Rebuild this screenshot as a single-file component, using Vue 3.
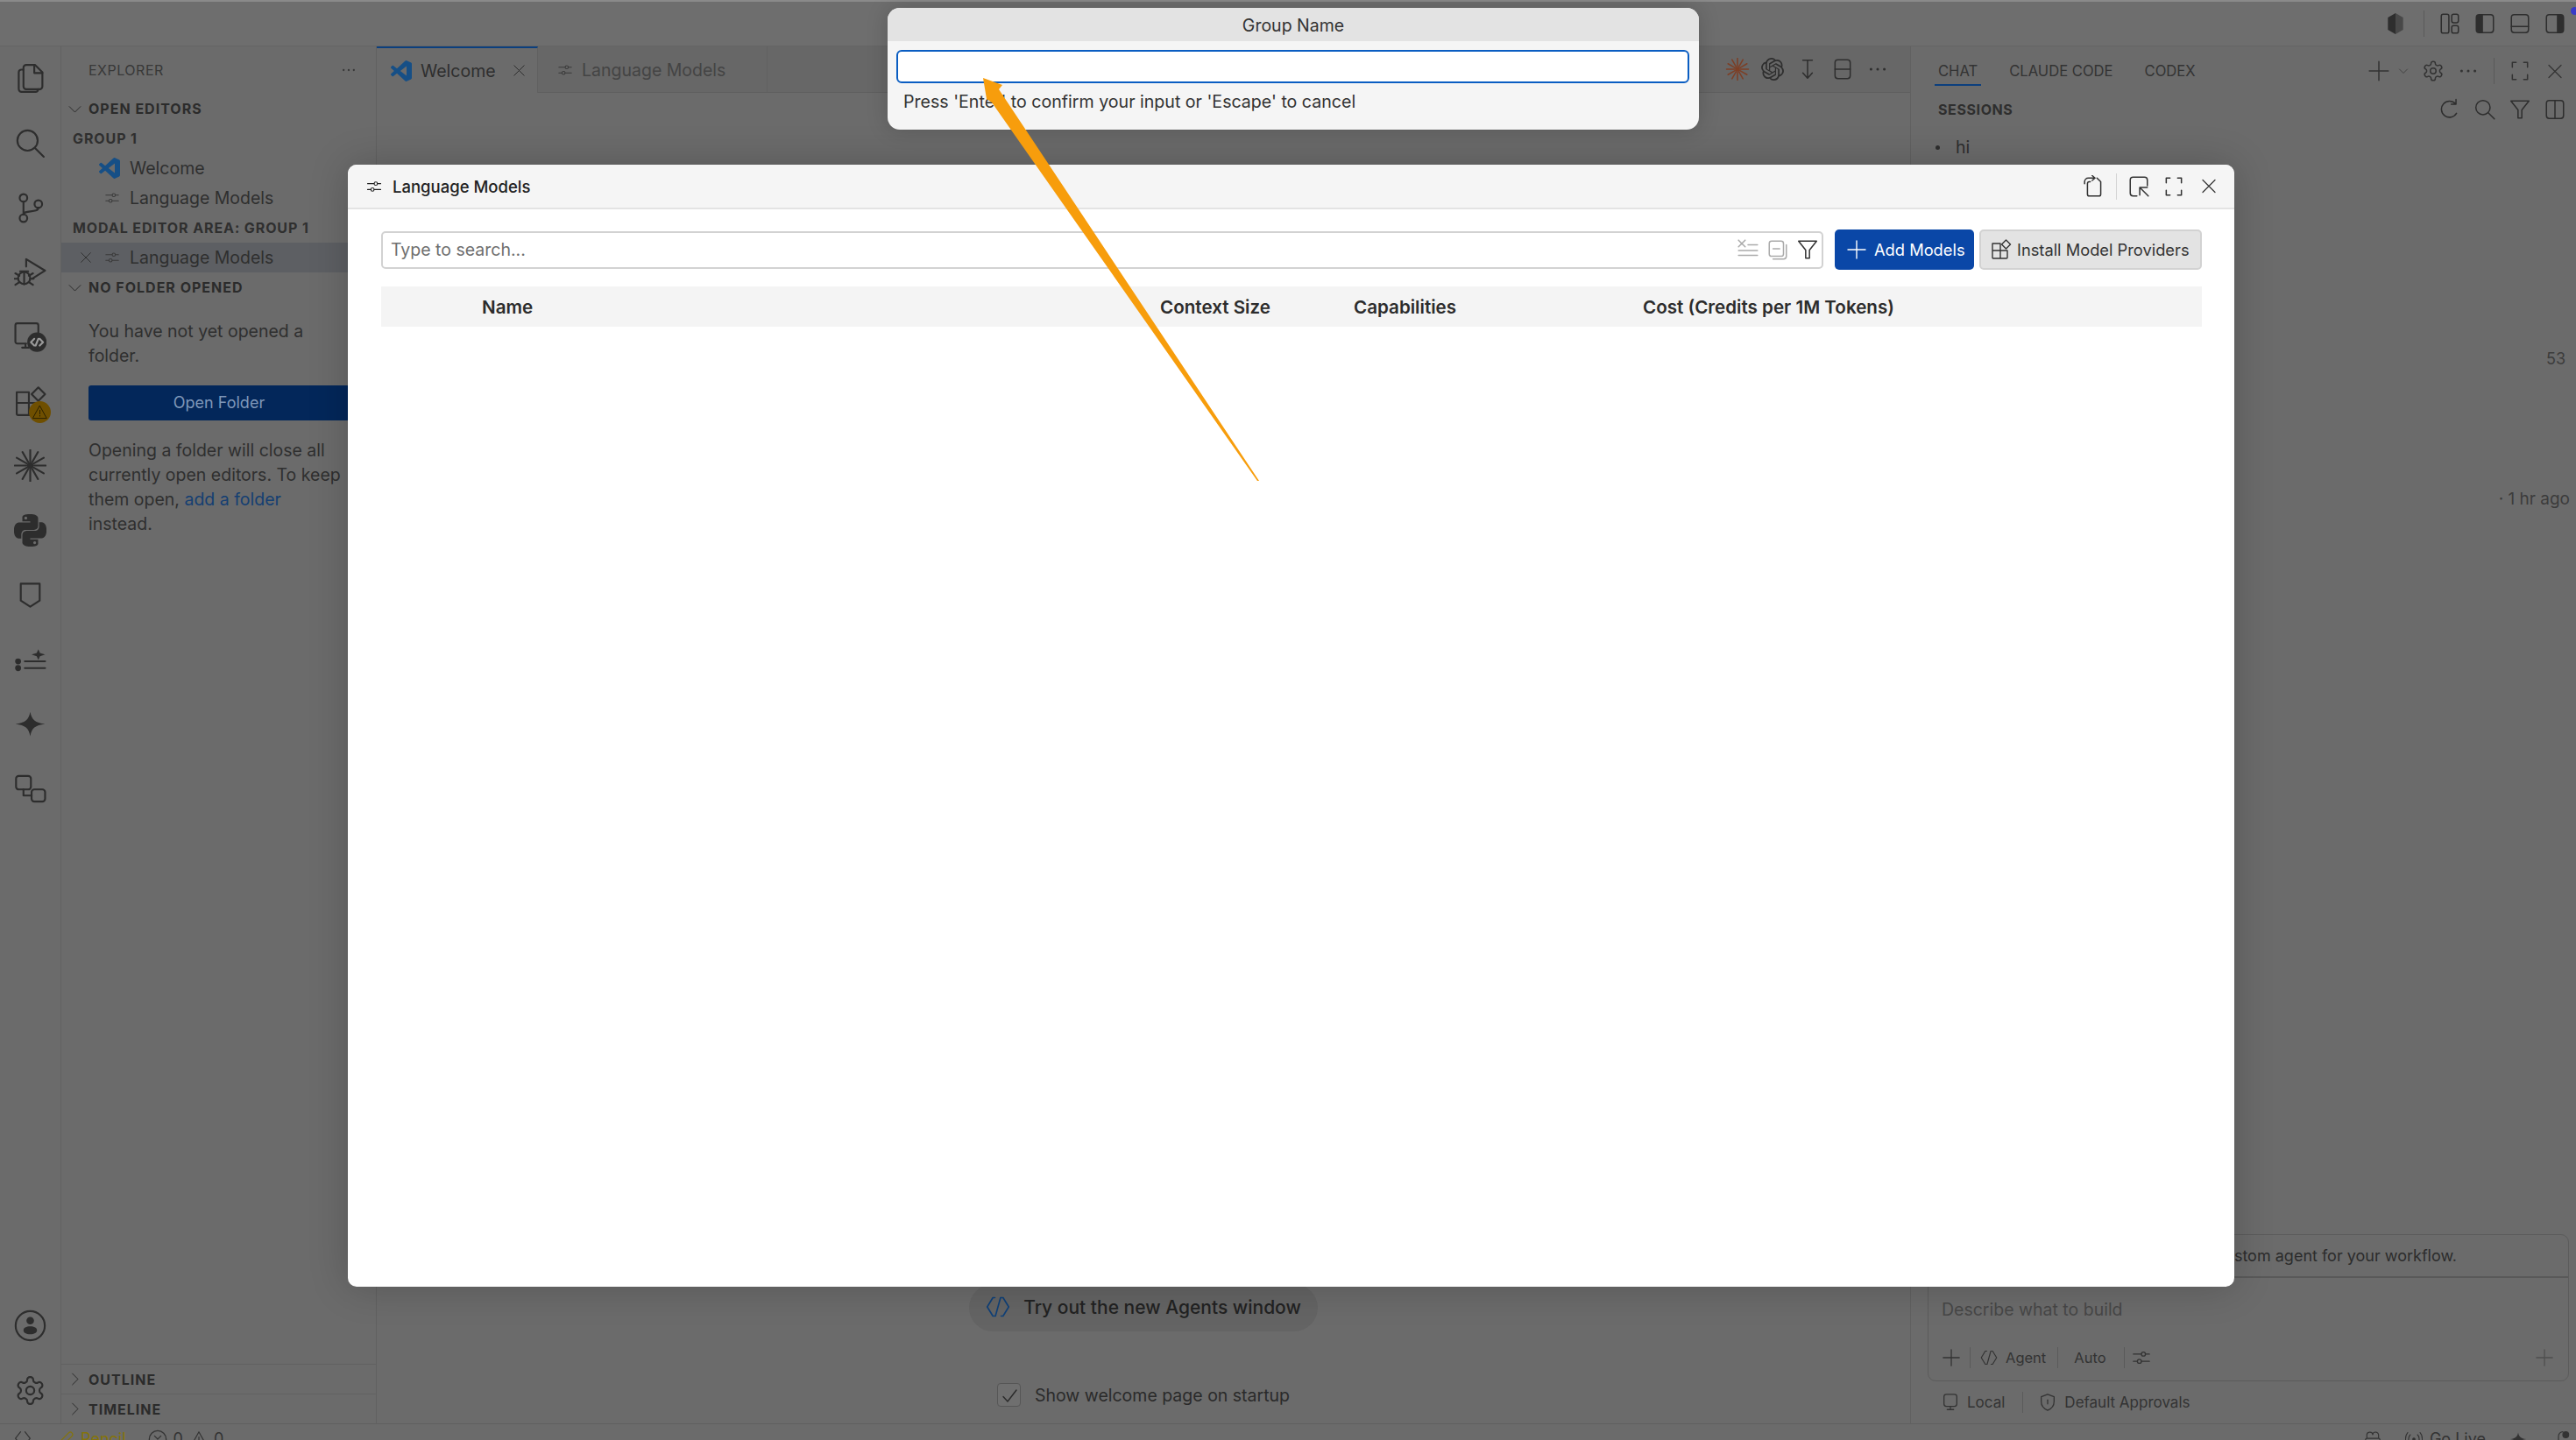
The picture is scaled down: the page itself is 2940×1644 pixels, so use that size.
<template>
  <div class="window">
    <!-- icon sprite -->
    <svg class="sprite">
      <symbol id="i-files" viewBox="0 0 24 24"><path d="M9 2h6.5L21 7.5V18a2 2 0 0 1-2 2H9a2 2 0 0 1-2-2V4a2 2 0 0 1 2-2z"/><path d="M15 2v6h6"/><path d="M7 5.500H5.500a2 2 0 0 0-2 2V20a2 2 0 0 0 2 2H16a2 2 0 0 0 2-2"/></symbol>
      <symbol id="i-search" viewBox="0 0 24 24"><circle cx="10" cy="10" r="7.500"/><path d="M15.500 15.500 22 22"/></symbol>
      <symbol id="i-git" viewBox="0 0 24 24"><circle cx="7" cy="4.500" r="2.800"/><circle cx="7" cy="19.500" r="2.800"/><circle cx="18" cy="9" r="2.800"/><path d="M7 7.300v9.400M18 11.800c0 4-11 1.500-11 5"/></symbol>
      <symbol id="i-debug" viewBox="0 0 24 24"><path d="M9 8V2.500L23 11l-9.500 6"/><circle cx="7.500" cy="16.500" r="4.500"/><path d="M4.500 11.500h6M7.500 12v9M1 13l3 1.800M14 13l-3 1.800M.5 17H3M14.500 17H12M1 21.500l3-2M14 21.500l-3-2"/></symbol>
      <symbol id="i-remote" viewBox="0 0 24 24"><path d="M9 17H2.500a1.500 1.500 0 0 1-1.500-1.500v-12A1.500 1.500 0 0 1 2.500 2h14A1.500 1.500 0 0 1 18 3.500V9M6 20h5M8.500 17v3"/><circle cx="17" cy="16" r="6.500" fill="currentColor"/><path d="m15 13.500-2.500 2.500 2.500 2.500M19 13.500l2.500 2.500-2.500 2.500M18 13.500l-2 5" stroke="#9a9a9a"/></symbol>
      <symbol id="i-ext" viewBox="0 0 24 24"><path d="M2 5h9v17H3a1 1 0 0 1-1-1zM2 13h17v8a1 1 0 0 1-1 1h-7M11 6v7"/><path d="m18 1.500 5 5-5 5-5-5z"/></symbol>
      <symbol id="i-burst" viewBox="0 0 24 24"><path d="M15 12h8.500M9 12H.5M12 15v8.500M12 9V.5M14.600 13.500 22 17.750M9.400 13.500 2 17.750M9.400 10.500 2 6.250M14.600 10.500 22 6.250M13.500 14.600 17.750 22M10.500 14.600 6.250 22M10.500 9.400 6.250 2M13.500 9.400 17.750 2"/><circle cx="12" cy="12" r="2.500" fill="currentColor" stroke="none"/></symbol>
      <symbol id="i-python" viewBox="0 0 24 24"><path fill="currentColor" stroke="none" d="M14.250.18l.9.2.730.26.590.3.450.32.340.34.250.34.160.33.100.3.040.26.020.2-.010.13V8.500l-.050.630-.130.550-.210.460-.260.380-.3.310-.330.250-.350.190-.350.140-.330.100-.3.070-.260.040-.210.020H8.770l-.690.050-.590.140-.5.220-.410.270-.330.320-.270.350-.2.360-.150.370-.1.350-.070.320-.040.270-.020.210v3.060H3.170l-.210-.030-.280-.070-.320-.120-.350-.180-.360-.260-.360-.360-.350-.460-.320-.590-.280-.730-.210-.880-.140-1.050-.050-1.230.060-1.220.160-1.040.240-.870.320-.710.360-.570.4-.44.420-.33.420-.24.4-.16.360-.1.320-.05.240-.01h.160l.060.010h8.160v-.830H6.180l-.010-2.750-.020-.370.050-.340.110-.310.170-.280.250-.260.310-.230.380-.2.440-.18.510-.15.580-.12.640-.1.710-.06.770-.04.840-.02 1.270.05zm-6.300 1.980l-.230.330-.080.410.080.410.230.340.330.220.410.090.410-.090.330-.220.230-.340.080-.410-.080-.410-.230-.33-.33-.22-.41-.09-.41.09zm13.090 3.950l.280.060.320.120.350.180.360.270.360.350.350.470.320.590.280.730.210.880.140 1.040.050 1.230-.060 1.230-.16 1.040-.24.860-.32.710-.36.570-.4.45-.42.33-.42.24-.4.16-.36.09-.32.05-.24.02-.16-.01h-8.220v.82h5.840l.01 2.76.02.36-.05.34-.11.31-.17.29-.25.25-.31.24-.38.2-.44.17-.51.15-.58.13-.64.09-.71.07-.77.04-.84.01-1.27-.04-1.07-.14-.9-.2-.73-.25-.59-.3-.45-.33-.34-.34-.25-.34-.16-.33-.1-.3-.04-.25-.02-.2.01-.13v-5.34l.05-.64.13-.54.21-.46.26-.38.3-.32.33-.24.35-.2.35-.14.33-.1.3-.06.26-.04.21-.02.13-.01h5.84l.69-.05.59-.14.5-.21.41-.28.33-.32.27-.35.2-.36.15-.36.1-.35.07-.32.04-.28.02-.21V6.070h2.090l.14.01zm-6.470 14.250l-.23.33-.08.41.08.41.23.33.33.23.41.08.41-.08.33-.23.23-.33.08-.41-.08-.41-.23-.33-.33-.23-.41-.08-.41.08z"/></symbol>
      <symbol id="i-shield" viewBox="0 0 24 24"><path d="M5 3.500h14v12.500l-7 4.500-7-4.500z"/></symbol>
      <symbol id="i-liststar" viewBox="0 0 24 24"><circle cx="3" cy="13" r="1.500" fill="currentColor"/><circle cx="3" cy="18" r="1.500" fill="currentColor"/><path d="M8 13h15M8 18h15"/><path fill="currentColor" stroke="none" d="m18 4 1.200 2.800L23 8l-3.800 1.200L18 12l-1.200-2.800L13 8l3.800-1.200z"/></symbol>
      <symbol id="i-star" viewBox="0 0 24 24"><path fill="currentColor" stroke="none" d="M12 3c1.200 6 3.500 8 11 9-7.500 1-9.800 3-11 9-1.200-6-3.500-8-11-9 7.500-1 9.800-3 11-9z"/></symbol>
      <symbol id="i-nodes" viewBox="0 0 24 24"><rect x="1.500" y="2.500" width="11" height="10" rx="2"/><rect x="13" y="12.500" width="10" height="9" rx="2"/><path d="M7 12.500V17h6"/></symbol>
      <symbol id="i-account" viewBox="0 0 24 24"><circle cx="12" cy="12" r="10.800"/><circle cx="12" cy="8.300" r="2.800" fill="currentColor" stroke="none"/><path fill="currentColor" stroke="none" d="M7 15.500c0-2 2-3 5-3s5 1 5 3c0 1.500-2 2.800-5 2.800s-5-1.300-5-2.800z"/></symbol>
      <symbol id="i-gear" viewBox="0 0 24 24"><path d="M12.220 2h-.44a2 2 0 0 0-2 2v.18a2 2 0 0 1-1 1.730l-.43.250a2 2 0 0 1-2 0l-.15-.08a2 2 0 0 0-2.730.730l-.22.380a2 2 0 0 0 .730 2.730l.15.1a2 2 0 0 1 1 1.720v.510a2 2 0 0 1-1 1.740l-.15.090a2 2 0 0 0-.730 2.730l.22.380a2 2 0 0 0 2.730.730l.15-.08a2 2 0 0 1 2 0l.43.250a2 2 0 0 1 1 1.730V20a2 2 0 0 0 2 2h.44a2 2 0 0 0 2-2v-.18a2 2 0 0 1 1-1.730l.43-.250a2 2 0 0 1 2 0l.15.08a2 2 0 0 0 2.730-.730l.22-.390a2 2 0 0 0-.730-2.730l-.15-.08a2 2 0 0 1-1-1.740v-.5a2 2 0 0 1 1-1.740l.15-.090a2 2 0 0 0 .730-2.730l-.22-.380a2 2 0 0 0-2.730-.730l-.15.08a2 2 0 0 1-2 0l-.43-.250a2 2 0 0 1-1-1.730V4a2 2 0 0 0-2-2z"/><circle cx="12" cy="12" r="3"/></symbol>
      <symbol id="i-vscode" viewBox="0 0 24 24"><path fill="currentColor" stroke="none" d="M23.150 2.587L18.210.21a1.494 1.494 0 0 0-1.705.29l-9.460 8.630-4.120-3.128a.999.999 0 0 0-1.276.057L.327 7.261A1 1 0 0 0 .326 8.740L3.899 12 .326 15.260a1 1 0 0 0 .001 1.479L1.650 17.940a.999.999 0 0 0 1.276.057l4.120-3.128 9.460 8.630a1.492 1.492 0 0 0 1.704.29l4.942-2.377A1.500 1.500 0 0 0 24 20.060V3.939a1.500 1.500 0 0 0-.85-1.352zm-5.146 14.861L10.826 12l7.178-5.448v10.896z"/></symbol>
      <symbol id="i-sliders" viewBox="0 0 24 24"><path d="M2 7.500h10M17 7.500h5M2 16.500h5M12 16.500h10"/><circle cx="14.500" cy="7.500" r="2.500"/><circle cx="9.500" cy="16.500" r="2.500"/></symbol>
      <symbol id="i-close" viewBox="0 0 24 24"><path d="m4 4 16 16M20 4 4 20"/></symbol>
      <symbol id="i-down" viewBox="0 0 24 24"><path d="m3 8 9 9 9-9"/></symbol>
      <symbol id="i-right" viewBox="0 0 24 24"><path d="m8 3 9 9-9 9"/></symbol>
      <symbol id="i-dots" viewBox="0 0 24 24"><circle cx="5" cy="12" r="1.400" fill="currentColor" stroke="none"/><circle cx="12" cy="12" r="1.400" fill="currentColor" stroke="none"/><circle cx="19" cy="12" r="1.400" fill="currentColor" stroke="none"/></symbol>
      <symbol id="i-plus" viewBox="0 0 24 24"><path d="M12 2v20M2 12h20"/></symbol>
      <symbol id="i-expand" viewBox="0 0 24 24"><path d="M8 3H4v5M16 3h4v5M8 21H4v-5M16 21h4v-5"/></symbol>
      <symbol id="i-ibeam" viewBox="0 0 24 24"><path d="M7 2.500h10M12 2.500V21M7 16l5 5.500 5-5.500"/></symbol>
      <symbol id="i-split" viewBox="0 0 24 24"><rect x="4" y="2" width="16" height="20" rx="3"/><path d="M4 12h16"/></symbol>
      <symbol id="i-refresh" viewBox="0 0 24 24"><path d="M19 16a8.500 8.500 0 1 1-1-10M18.500 1.500V6.500H13.500"/></symbol>
      <symbol id="i-funnel" viewBox="0 0 24 24"><path d="M2.500 3h19L14 12.500V21h-4v-8.500z"/></symbol>
      <symbol id="i-sidebyside" viewBox="0 0 24 24"><rect x="3" y="2.500" width="18" height="19" rx="3"/><path d="M12 2.500v19"/></symbol>
      <symbol id="i-layout" viewBox="0 0 24 24"><rect x="3" y="2" width="8" height="20" rx="2"/><rect x="14" y="2" width="7" height="9" rx="2"/><rect x="14" y="14" width="7" height="8" rx="2"/></symbol>
      <symbol id="i-panel-left" viewBox="0 0 24 24"><rect x="3" y="2.500" width="18" height="19" rx="3"/><path fill="currentColor" stroke="none" d="M3 5.500a3 3 0 0 1 3-3h4v19H6a3 3 0 0 1-3-3z"/></symbol>
      <symbol id="i-panel-bottom" viewBox="0 0 24 24"><rect x="3" y="2.500" width="18" height="19" rx="3"/><path d="M3 15h18"/></symbol>
      <symbol id="i-panel-right" viewBox="0 0 24 24"><rect x="3" y="2.500" width="18" height="19" rx="3"/><path fill="currentColor" stroke="none" d="M21 5.500a3 3 0 0 0-3-3h-4v19h4a3 3 0 0 0 3-3z"/></symbol>
      <symbol id="i-contrast" viewBox="0 0 24 24"><path fill="currentColor" stroke="none" d="M12 1 4 5.500v13L12 23z"/><path fill="currentColor" stroke="none" opacity=".6" d="m12 1 8 4.500v13L12 23z"/></symbol>
      <symbol id="i-openai" viewBox="0 0 24 24"><path fill="currentColor" stroke="none" d="M22.2819 9.8211a5.9847 5.9847 0 0 0-.5157-4.9108 6.0462 6.0462 0 0 0-6.5098-2.9A6.0651 6.0651 0 0 0 4.9807 4.1818a5.9847 5.9847 0 0 0-3.9977 2.9 6.0462 6.0462 0 0 0 .7427 7.0966 5.98 5.98 0 0 0 .511 4.9107 6.051 6.051 0 0 0 6.5146 2.9001A5.9847 5.9847 0 0 0 13.2599 24a6.0557 6.0557 0 0 0 5.7718-4.2058 5.9894 5.9894 0 0 0 3.9977-2.9001 6.0557 6.0557 0 0 0-.7475-7.0729zm-9.022 12.6081a4.4755 4.4755 0 0 1-2.8764-1.0408l.1419-.0804 4.7783-2.7582a.7948.7948 0 0 0 .3927-.6813v-6.7369l2.02 1.1686a.071.071 0 0 1 .038.052v5.5826a4.504 4.504 0 0 1-4.4945 4.4944zm-9.6607-4.1254a4.4708 4.4708 0 0 1-.5346-3.0137l.142.0852 4.783 2.7582a.7712.7712 0 0 0 .7806 0l5.8428-3.3685v2.3324a.0804.0804 0 0 1-.0332.0615L9.74 19.9502a4.4992 4.4992 0 0 1-6.1408-1.6464zM2.3408 7.8956a4.485 4.485 0 0 1 2.3655-1.9728V11.6a.7664.7664 0 0 0 .3879.6765l5.8144 3.3543-2.0201 1.1685a.0757.0757 0 0 1-.071 0l-4.8303-2.7865A4.504 4.504 0 0 1 2.3408 7.872zm16.5963 3.8558L13.1038 8.364 15.1192 7.2a.0757.0757 0 0 1 .071 0l4.8303 2.7913a4.4944 4.4944 0 0 1-.6765 8.1042v-5.6772a.79.79 0 0 0-.407-.667zm2.0107-3.0231l-.142-.0852-4.7735-2.7818a.7759.7759 0 0 0-.7854 0L9.409 9.2297V6.8974a.0662.0662 0 0 1 .0284-.0615l4.8303-2.7866a4.4992 4.4992 0 0 1 6.6802 4.66zM8.3065 12.863l-2.02-1.1638a.0804.0804 0 0 1-.038-.0567V6.0742a4.4992 4.4992 0 0 1 7.3757-3.4537l-.142.0805L8.704 5.459a.7948.7948 0 0 0-.3927.6813zm1.0976-2.3654l2.602-1.4998 2.6069 1.4998v2.9994l-2.5974 1.4997-2.6067-1.4997Z"/></symbol>
      <symbol id="i-agent" viewBox="0 0 24 24"><path d="M9 3H7L1.500 12 7 21h2M15 3h2l5.500 9L17 21h-2M14.500 3 9.500 21"/></symbol>
      <symbol id="i-newfile" viewBox="0 0 24 24"><path d="M8 7H7a2 2 0 0 0-2 2v11a2 2 0 0 0 2 2h10a2 2 0 0 0 2-2V7l-4-4"/><path d="M2 9V7a4 4 0 0 1 4-4h7M10 .5 13 3l-3 2.500"/></symbol>
      <symbol id="i-popout" viewBox="0 0 24 24"><path d="M10 22H6a3 3 0 0 1-3-3V5a3 3 0 0 1 3-3h12a3 3 0 0 1 3 3v6"/><path d="M13 13h8M13 13v8M13 13l9 9"/></symbol>
      <symbol id="i-clearall" viewBox="0 0 24 24"><path d="m2 2 7 7M9 2 2 9M12 7h10M2 13h20M2 18h20"/></symbol>
      <symbol id="i-collapse" viewBox="0 0 24 24"><rect x="3" y="3" width="15" height="16" rx="2.500"/><path d="M7 11h7M21 7v12a3 3 0 0 1-3 3H7"/></symbol>
      <symbol id="i-extbox" viewBox="0 0 24 24"><path d="M2 5h9v17H3a1 1 0 0 1-1-1zM2 13h17v8a1 1 0 0 1-1 1h-7M11 6v7"/><path d="m17.500 1 5 5-5 5-5-5z"/></symbol>
      <symbol id="i-monitor" viewBox="0 0 24 24"><rect x="4" y="2" width="16" height="15" rx="3"/><path d="M8 21h8M12 17v4"/></symbol>
      <symbol id="i-guard" viewBox="0 0 24 24"><path d="M12 2 4 5v6c0 5 3 9 8 11 5-2 8-6 8-11V5z"/><path d="M12 9v5"/></symbol>
      <symbol id="i-pencil" viewBox="0 0 24 24"><path d="m3 21 1.500-6L16 3.500a3 3 0 0 1 4.500 4.500L9 19.500z"/></symbol>
      <symbol id="i-error" viewBox="0 0 24 24"><circle cx="12" cy="12" r="10.500"/><path d="m8 8 8 8M16 8l-8 8"/></symbol>
      <symbol id="i-warn" viewBox="0 0 24 24"><path d="M12 2 23 22H1z"/><path d="M12 9v6M12 17.500v1"/></symbol>
      <symbol id="i-remoteopen" viewBox="0 0 24 24"><path d="m9 3-7 9 7 9M15 3l7 9-7 9" transform="translate(0 -1)"/></symbol>
      <symbol id="i-copilot" viewBox="0 0 24 24"><path d="M4 11V7a4 4 0 0 1 8-1 4 4 0 0 1 8 1v4M2 14c0-2 1-3 2-3h16c1 0 2 1 2 3v3c-3 3-6 4-10 4s-7-1-10-4z"/></symbol>
      <symbol id="i-broadcast" viewBox="0 0 24 24"><circle cx="12" cy="12" r="1.500" fill="currentColor"/><path d="M7 6c-3 3-3 9 0 12M17 6c3 3 3 9 0 12M3.500 3c-4 5-4 13 0 18M20.500 3c4 5 4 13 0 18"/></symbol>
      <symbol id="i-bell" viewBox="0 0 24 24"><path d="M6 22V8a6 6 0 0 1 6-6"/><circle cx="16" cy="6" r="4" fill="currentColor"/></symbol>
    </svg>

    <header class="titlebar">
      <svg class="ic btn"><use href="#i-contrast" /></svg>
      <span class="vsep tall"></span>
      <svg class="ic btn" v-for="name in titleIcons" :key="name"><use :href="'#' + name" /></svg>
      <i class="account-dot"></i>
    </header>

    <div class="main">
      <nav class="activity">
        <div class="activity-item" v-for="item in activityTop" :key="item">
          <svg class="ic act-icon"><use :href="'#' + item" /></svg>
          <span v-if="item === 'i-ext'" class="warn-badge">
            <svg class="ic badge-icon"><use href="#i-warn" /></svg>
          </span>
        </div>
        <div class="activity-bottom">
          <div class="activity-item"><svg class="ic act-icon"><use href="#i-account" /></svg></div>
          <div class="activity-item"><svg class="ic act-icon"><use href="#i-gear" /></svg></div>
        </div>
      </nav>

      <aside class="sidebar">
        <div class="side-head">
          <span>EXPLORER</span>
          <svg class="ic side-dots"><use href="#i-dots" /></svg>
        </div>
        <div class="row section"><svg class="ic chev"><use href="#i-down" /></svg>OPEN EDITORS</div>
        <div class="row group">GROUP 1</div>
        <div class="row file">
          <svg class="ic file-icon vscode"><use href="#i-vscode" /></svg>
          Welcome
        </div>
        <div class="row file">
          <svg class="ic file-icon slider"><use href="#i-sliders" /></svg>
          Language Models
        </div>
        <div class="row group">MODAL EDITOR AREA: GROUP 1</div>
        <div class="row file selected">
          <svg class="ic row-close"><use href="#i-close" /></svg>
          <svg class="ic file-icon slider"><use href="#i-sliders" /></svg>
          Language Models
        </div>
        <div class="row section"><svg class="ic chev"><use href="#i-down" /></svg>NO FOLDER OPENED</div>
        <div class="no-folder">
          <p>You have not yet opened a folder.</p>
          <button class="open-folder">Open Folder</button>
          <p>Opening a folder will close all currently open editors. To keep them open, <a>add a folder</a> instead.</p>
        </div>
        <div class="side-bottom">
          <div class="row section lined"><svg class="ic chev"><use href="#i-right" /></svg>OUTLINE</div>
          <div class="row section lined"><svg class="ic chev"><use href="#i-right" /></svg>TIMELINE</div>
        </div>
      </aside>

      <section class="editor">
        <div class="tabs">
          <div class="tab active">
            <svg class="ic tab-icon vscode"><use href="#i-vscode" /></svg>
            <span>Welcome</span>
            <svg class="ic tab-close"><use href="#i-close" /></svg>
          </div>
          <div class="tab other">
            <svg class="ic tab-icon slider"><use href="#i-sliders" /></svg>
            <span>Language Models</span>
          </div>
          <div class="tab-actions">
            <svg class="ic btn burst"><use href="#i-burst" /></svg>
            <svg class="ic btn"><use href="#i-openai" /></svg>
            <svg class="ic btn"><use href="#i-ibeam" /></svg>
            <svg class="ic btn"><use href="#i-split" /></svg>
            <svg class="ic btn"><use href="#i-dots" /></svg>
          </div>
        </div>
        <div class="welcome">
          <div class="agents-pill">
            <svg class="ic pill-icon"><use href="#i-agent" /></svg>
            Try out the new Agents window
          </div>
          <label class="startup">
            <span class="check"><svg class="ic"><path d="M5 12.500 10 18 20 5" /></svg></span>
            Show welcome page on startup
          </label>
        </div>
      </section>

      <aside class="chat">
        <div class="chat-head">
          <span class="chat-tab current">CHAT</span>
          <span class="chat-tab">CLAUDE CODE</span>
          <span class="chat-tab">CODEX</span>
          <div class="chat-actions">
            <svg class="ic btn plus"><use href="#i-plus" /></svg>
            <svg class="ic btn small-chev"><use href="#i-down" /></svg>
            <svg class="ic btn"><use href="#i-gear" /></svg>
            <svg class="ic btn"><use href="#i-dots" /></svg>
            <span class="vsep"></span>
            <svg class="ic btn"><use href="#i-expand" /></svg>
            <svg class="ic btn btn-close"><use href="#i-close" /></svg>
          </div>
        </div>
        <div class="sessions-head">
          <span>SESSIONS</span>
          <div class="chat-actions">
            <svg class="ic btn"><use href="#i-refresh" /></svg>
            <svg class="ic btn"><use href="#i-search" /></svg>
            <svg class="ic btn"><use href="#i-funnel" /></svg>
            <svg class="ic btn"><use href="#i-sidebyside" /></svg>
          </div>
        </div>
        <div class="session"><i class="bullet"></i>hi</div>
        <div class="session-meta count">53</div>
        <div class="session-meta age">· 1 hr ago</div>

        <div class="composer">
          <div class="hint">Create a custom agent for your workflow.</div>
          <div class="prompt">Describe what to build</div>
          <div class="composer-tools">
            <svg class="ic tool-plus"><use href="#i-plus" /></svg>
            <span class="vsep short"></span>
            <svg class="ic tool-icon"><use href="#i-agent" /></svg>
            <span class="tool-label">Agent</span>
            <span class="vsep short"></span>
            <span class="tool-label auto">Auto</span>
            <span class="vsep short"></span>
            <svg class="ic tool-sliders"><use href="#i-sliders" /></svg>
            <svg class="ic tool-send"><use href="#i-plus" /></svg>
          </div>
        </div>
        <div class="chat-foot">
          <svg class="ic foot-icon"><use href="#i-monitor" /></svg>
          <span>Local</span>
          <span class="vsep short foot-sep"></span>
          <svg class="ic foot-icon"><use href="#i-guard" /></svg>
          <span>Default Approvals</span>
        </div>
      </aside>
    </div>

    <footer class="statusbar">
      <svg class="ic st-remote"><use href="#i-remoteopen" /></svg>
      <svg class="ic st-icon pencil"><use href="#i-pencil" /></svg>
      <span class="pencil pencil-label">Pencil</span>
      <svg class="ic st-icon st-err"><use href="#i-error" /></svg><span>0</span>
      <svg class="ic st-icon st-warn"><use href="#i-warn" /></svg><span>0</span>
      <div class="status-right">
        <svg class="ic st-icon"><use href="#i-copilot" /></svg>
        <span class="golive"><svg class="ic st-icon"><use href="#i-broadcast" /></svg>Go Live</span>
        <svg class="ic st-icon"><use href="#i-star" /></svg>
        <svg class="ic st-icon st-bell"><use href="#i-bell" /></svg>
      </div>
    </footer>

    <!-- modal editor -->
    <div class="modal">
      <div class="modal-head">
        <svg class="ic modal-slider"><use href="#i-sliders" /></svg>
        <span class="modal-title">Language Models</span>
        <div class="modal-actions">
          <svg class="ic btn"><use href="#i-newfile" /></svg>
          <span class="vsep tall"></span>
          <svg class="ic btn"><use href="#i-popout" /></svg>
          <svg class="ic btn"><use href="#i-expand" /></svg>
          <svg class="ic btn btn-close"><use href="#i-close" /></svg>
        </div>
      </div>
      <div class="modal-body">
        <div class="toolbar">
          <div class="search">
            <input type="text" placeholder="Type to search..." />
            <svg class="ic search-icon faint"><use href="#i-clearall" /></svg>
            <svg class="ic search-icon faint"><use href="#i-collapse" /></svg>
            <svg class="ic search-icon"><use href="#i-funnel" /></svg>
          </div>
          <button class="add-models"><svg class="ic"><use href="#i-plus" /></svg>Add Models</button>
          <button class="install"><svg class="ic"><use href="#i-extbox" /></svg>Install Model Providers</button>
        </div>
        <div class="table-head">
          <span class="col-name">Name</span>
          <span>Context Size</span>
          <span>Capabilities</span>
          <span>Cost (Credits per 1M Tokens)</span>
        </div>
      </div>
    </div>

    <!-- quick input -->
    <div class="quick">
      <div class="quick-title">Group Name</div>
      <div class="quick-body">
        <input class="quick-input" type="text" />
        <div class="quick-msg">Press 'Enter' to confirm your input or 'Escape' to cancel</div>
      </div>
    </div>

    <!-- annotation arrow drawn on the screenshot -->
    <svg class="arrow" viewBox="0 0 2940 1644">
      <polygon points="1122,89 1144,97 1140,102 1437,549 1435,549 1132,117 1126,113" fill="#f79d0c" />
    </svg>
  </div>
</template>

<script setup>
const titleIcons = ['i-layout', 'i-panel-left', 'i-panel-bottom', 'i-panel-right']
const activityTop = [
  'i-files', 'i-search', 'i-git', 'i-debug', 'i-remote', 'i-ext',
  'i-burst', 'i-python', 'i-shield', 'i-liststar', 'i-star', 'i-nodes'
]
</script>

<style>
html, body {
  margin: 0;
  background: #6b6b6b;
}
</style>

<style scoped>
.window {
  position: relative;
  width: 2940px;
  height: 1644px;
  overflow: hidden;
  display: grid;
  grid-template-rows: 53px 1572px 34px;
  background: #6b6b6b;
  color: #2e2e2e;
  font-family: Inter, "Liberation Sans", sans-serif;
  font-size: 19.5px;
}
.sprite {
  position: absolute;
  width: 0;
  height: 0;
}
.ic {
  width: 24px;
  height: 24px;
  fill: none;
  stroke: currentColor;
  stroke-width: 1.4;
  stroke-linecap: round;
  stroke-linejoin: round;
  flex: none;
}
.btn {
  width: 40px;
  height: 26px;
}
.btn-close {
  height: 21px;
}
.vsep {
  width: 1px;
  height: 30px;
  background: #5a5a5a;
  flex: none;
}
.vsep.short {
  height: 24px;
}

/* title bar */
.titlebar {
  display: flex;
  align-items: center;
  justify-content: flex-end;
  padding-right: 4px;
  background: #6e6e6e;
  border-top: 2px solid #8a8a8a;
  border-bottom: 1px solid #646464;
  position: relative;
}
.titlebar .vsep {
  margin: 0 9px 0 12px;
}
.account-dot {
  position: absolute;
  right: -3px;
  top: 6px;
  width: 9px;
  height: 9px;
  border-radius: 50%;
  background: #3a3ac8;
}

.main {
  display: flex;
  min-height: 0;
}

/* activity bar */
.activity {
  width: 70px;
  flex: none;
  display: flex;
  flex-direction: column;
  border-right: 1px solid #616161;
  box-sizing: border-box;
  color: #2d2d2d;
}
.activity-item {
  position: relative;
  height: 73.7px;
  flex: none;
  display: flex;
  align-items: center;
  justify-content: center;
}
.act-icon {
  width: 37px;
  height: 37px;
}
.activity-bottom {
  margin-top: auto;
  padding-bottom: 1px;
}
.warn-badge {
  position: absolute;
  left: 33px;
  top: 37px;
  width: 25px;
  height: 25px;
  border-radius: 50%;
  background: #6f4f00;
  display: flex;
  align-items: center;
  justify-content: center;
  color: #2a2000;
}
.badge-icon {
  width: 17px;
  height: 17px;
}

/* explorer */
.sidebar {
  width: 360px;
  flex: none;
  box-sizing: border-box;
  display: flex;
  flex-direction: column;
  background: #6b6b6b;
  border-right: 1px solid #616161;
  color: #2f2f2f;
}
.side-head {
  height: 54px;
  flex: none;
  display: flex;
  align-items: center;
  justify-content: space-between;
  padding: 0 21px 0 31px;
  font-size: 16px;
  letter-spacing: .5px;
  color: #383838;
}
.side-dots {
  width: 20px;
  height: 20px;
}
.row {
  height: 34px;
  flex: none;
  display: flex;
  align-items: center;
  box-sizing: border-box;
}
.section {
  font-size: 16px;
  font-weight: 700;
  letter-spacing: 1px;
  padding-left: 7px;
  color: #2b2b2b;
}
.chev {
  width: 17px;
  height: 17px;
  margin-right: 7px;
}
.group {
  font-size: 16px;
  font-weight: 700;
  letter-spacing: .9px;
  padding-left: 13px;
  color: #2f2f2f;
}
.file {
  padding-left: 43px;
  gap: 11px;
}
.file-icon {
  width: 24px;
  height: 24px;
}
.vscode {
  color: #164f86;
}
.slider {
  color: #3a3a3a;
  transform: scale(.72);
}
.file .slider {
  transform: translateX(3px) scale(.72);
}
.selected {
  background: #5d5f63;
  position: relative;
}
.row-close {
  position: absolute;
  left: 20px;
  width: 16px;
  height: 16px;
}
.no-folder {
  padding: 19px 30px 0 31px;
  line-height: 28px;
}
.no-folder p {
  margin: 0;
}
.open-folder {
  display: block;
  box-sizing: border-box;
  width: 298px;
  height: 40px;
  margin: 20px 0;
  border: none;
  border-radius: 3px;
  background: #03275a;
  color: #7f97b9;
  font: inherit;
  font-size: 18px;
}
.no-folder a {
  color: #143f72;
}
.side-bottom {
  margin-top: auto;
}
.lined {
  border-top: 1px solid #616161;
}

/* editor */
.editor {
  flex: 1;
  min-width: 0;
  display: flex;
  flex-direction: column;
}
.tabs {
  height: 53px;
  flex: none;
  box-sizing: border-box;
  display: flex;
  background: #676767;
  border-bottom: 1px solid #5f5f5f;
}
.tab {
  display: flex;
  align-items: center;
  box-sizing: border-box;
  border-right: 1px solid #616161;
}
.tab.active {
  width: 184px;
  height: 53px;
  padding-left: 16px;
  background: #6b6b6b;
  border-top: 2px solid #0b3f7e;
}
.tab.other {
  width: 262px;
  padding: 2px 0 0 19px;
  color: #444;
}
.tab-icon {
  margin-right: 10px;
}
.tab.other .tab-icon {
  margin-right: 7px;
}
.tab-close {
  width: 17px;
  height: 17px;
  margin-left: 18px;
}
.tab-actions {
  margin-left: auto;
  display: flex;
  align-items: center;
  padding-right: 17px;
}
.burst {
  color: #7d3f26;
}
.welcome {
  flex: 1;
  display: flex;
  flex-direction: column;
  justify-content: flex-end;
  align-items: center;
  padding-bottom: 19px;
}
.agents-pill {
  height: 54px;
  box-sizing: border-box;
  padding: 0 19px 2px 19px;
  border-radius: 27px;
  background: #646464;
  display: flex;
  align-items: center;
  gap: 15px;
  font-size: 21px;
  font-weight: 500;
  color: #222;
}
.pill-icon {
  width: 28px;
  height: 28px;
  color: #0f4078;
}
.startup {
  margin-top: 59px;
  display: flex;
  align-items: center;
  gap: 16px;
  color: #2a2a2a;
}
.check {
  width: 27px;
  height: 27px;
  box-sizing: border-box;
  border: 1px solid #565656;
  border-radius: 4px;
  background: #6f6f6f;
  display: flex;
  align-items: center;
  justify-content: center;
}
.check .ic {
  width: 22px;
  height: 22px;
}

/* chat panel */
.chat {
  width: 760px;
  flex: none;
  box-sizing: border-box;
  display: flex;
  flex-direction: column;
  border-left: 1px solid #616161;
  margin-left: 0;
}
.chat-head {
  height: 54px;
  flex: none;
  display: flex;
  align-items: center;
  padding: 1px 0 0 31px;
  gap: 36px;
  font-size: 16.6px;
  color: #333;
}
.chat-tab {
  position: relative;
}
.chat-tab.current::after {
  content: "";
  position: absolute;
  left: -4px;
  right: -4px;
  bottom: -7px;
  height: 2px;
  background: #0b3f7e;
}
.chat-actions {
  margin-left: auto;
  display: flex;
  align-items: center;
  padding-right: 4px;
}
.plus {
  width: 28px;
}
.small-chev {
  width: 28px;
  height: 12px;
}
.chat-actions .vsep {
  margin: 0 9px;
}
.sessions-head {
  height: 34px;
  flex: none;
  display: flex;
  align-items: center;
  padding-left: 31px;
  font-size: 16px;
  font-weight: 700;
  letter-spacing: .6px;
}
.session {
  height: 52px;
  flex: none;
  display: flex;
  align-items: center;
  padding-left: 28px;
  gap: 18px;
}
.bullet {
  width: 5px;
  height: 5px;
  border-radius: 50%;
  background: #2e2e2e;
}
.session-meta {
  text-align: right;
  color: #3c3c3c;
  flex: none;
}
.count {
  margin-top: 205px;
  padding-right: 12px;
  font-size: 18px;
}
.age {
  margin-top: 138px;
  padding-right: 7px;
  font-size: 19px;
}
.composer {
  margin: auto 8px 0 19px;
  height: 168px;
  flex: none;
  box-sizing: border-box;
  border: 1px solid #5b5b5b;
  border-radius: 9px;
  display: flex;
  flex-direction: column;
}
.hint {
  height: 49px;
  flex: none;
  box-sizing: border-box;
  border-bottom: 2px solid #595959;
  display: flex;
  align-items: center;
  justify-content: flex-end;
  padding-right: 127px;
  font-size: 18px;
  color: #2c2c2c;
}
.prompt {
  flex: 1;
  padding: 24px 15px 0;
  color: #474747;
}
.composer-tools {
  height: 52px;
  flex: none;
  display: flex;
  align-items: center;
  padding: 0 16px 0 15px;
  font-size: 16.5px;
  color: #333;
}
.tool-plus {
  width: 22px;
  height: 22px;
  margin-right: 10px;
}
.tool-icon {
  width: 20px;
  height: 20px;
  margin: 0 9px 0 11px;
}
.tool-label {
  margin-right: 13px;
}
.auto {
  margin-left: 18px;
  margin-right: 20px;
}
.tool-sliders {
  width: 22px;
  height: 22px;
  margin-left: 8px;
}
.tool-send {
  width: 22px;
  height: 22px;
  margin-left: auto;
  color: #4f4f4f;
}
.chat-foot {
  height: 48px;
  flex: none;
  display: flex;
  align-items: center;
  padding-left: 34px;
  gap: 8px;
  font-size: 17px;
  color: #333;
}
.foot-icon {
  width: 22px;
  height: 22px;
}
.foot-sep {
  margin: 0 9px 0 12px;
}

/* status bar */
.statusbar {
  display: flex;
  align-items: center;
  padding-left: 16px;
  gap: 7px;
  font-size: 18px;
  color: #333;
  border-top: 1px solid #5f5f5f;
  background: #6b6b6b;
}
.st-icon {
  width: 20px;
  height: 20px;
}
.st-remote {
  width: 20px;
  height: 20px;
  margin-right: 22px;
}
.pencil {
  color: #85740a;
}
.pencil-label {
  margin-right: 18px;
}
.st-err {
  width: 22px;
  height: 22px;
}
.st-warn {
  margin-left: 1px;
}
.status-right {
  margin-left: auto;
  display: flex;
  align-items: center;
  gap: 27px;
  padding-right: 5px;
}
.golive {
  display: flex;
  align-items: center;
  gap: 8px;
}
.st-bell {
  margin-left: 4px;
}

/* modal */
.modal {
  position: absolute;
  left: 397px;
  top: 188px;
  width: 2153px;
  height: 1281px;
  background: #fff;
  border-radius: 10px;
  box-shadow: 0 0 46px rgba(0, 0, 0, .2);
  overflow: hidden;
  display: flex;
  flex-direction: column;
}
.modal-head {
  height: 51px;
  flex: none;
  box-sizing: border-box;
  background: #f5f5f5;
  border-bottom: 2px solid #e3e3e3;
  display: flex;
  align-items: center;
  padding: 0 9px 0 21px;
  color: #222;
}
.modal-slider {
  width: 18px;
  height: 18px;
  margin-right: 12px;
}
.modal-title {
  font-size: 18.5px;
  font-weight: 500;
}
.modal-actions {
  margin-left: auto;
  display: flex;
  align-items: center;
  color: #333;
}
.modal-actions .vsep {
  background: #d4d4d4;
  margin: 0 5px;
}
.modal-body {
  padding: 23px 37px 0 38px;
}
.toolbar {
  display: flex;
  align-items: center;
}
.search {
  width: 1646px;
  height: 43px;
  box-sizing: border-box;
  border: 2px solid #d2d2d2;
  border-radius: 5px;
  display: flex;
  align-items: center;
  padding-right: 3px;
  gap: 8px;
  margin-right: 13px;
}
.search input {
  flex: 1;
  min-width: 0;
  border: none;
  outline: none;
  background: none;
  padding: 0 0 0 9px;
  font: inherit;
}
.search input::placeholder {
  color: #6f6f6f;
  opacity: 1;
}
.search-icon {
  width: 26px;
  height: 26px;
  color: #333;
}
.faint {
  color: #aaa;
}
.add-models, .install {
  height: 46px;
  box-sizing: border-box;
  border-radius: 5px;
  font: inherit;
  font-size: 18.3px;
  display: flex;
  align-items: center;
  white-space: nowrap;
}
.add-models {
  width: 159px;
  background: #0a47a7;
  color: #fff;
  border: none;
  padding-left: 13px;
  gap: 8px;
  margin-right: 6px;
}
.install {
  width: 254px;
  background: #e3e3e3;
  color: #333;
  border: 2px solid #d2d2d2;
  padding-left: 11px;
  gap: 6px;
}
.table-head {
  margin-top: 19px;
  height: 46px;
  background: #f4f4f4;
  display: grid;
  grid-template-columns: 889px 221px 330px 1fr;
  align-items: center;
  font-size: 20.6px;
  font-weight: 600;
  color: #2c2c2c;
}
.col-name {
  padding-left: 115px;
}

/* quick input */
.quick {
  position: absolute;
  left: 1013px;
  top: 9px;
  width: 926px;
  height: 139px;
  border-radius: 14px;
  background: #f5f5f5;
  overflow: hidden;
  box-shadow: 0 0 24px rgba(0, 0, 0, .18);
  display: flex;
  flex-direction: column;
}
.quick-title {
  height: 38px;
  flex: none;
  box-sizing: border-box;
  padding-top: 2px;
  background: #e3e3e3;
  display: flex;
  align-items: center;
  justify-content: center;
  font-size: 19.5px;
  color: #333;
}
.quick-body {
  padding: 10px 11px 0 10px;
}
.quick-input {
  display: block;
  width: 100%;
  height: 38px;
  box-sizing: border-box;
  border: 2px solid #0a5dc2;
  border-radius: 6px;
  background: #fff;
  outline: none;
}
.quick-msg {
  margin-top: 9px;
  padding-left: 8px;
  font-size: 19.6px;
  line-height: 24px;
  color: #333;
}

.arrow {
  position: absolute;
  left: 0;
  top: 0;
  width: 2940px;
  height: 1644px;
  pointer-events: none;
}
</style>
